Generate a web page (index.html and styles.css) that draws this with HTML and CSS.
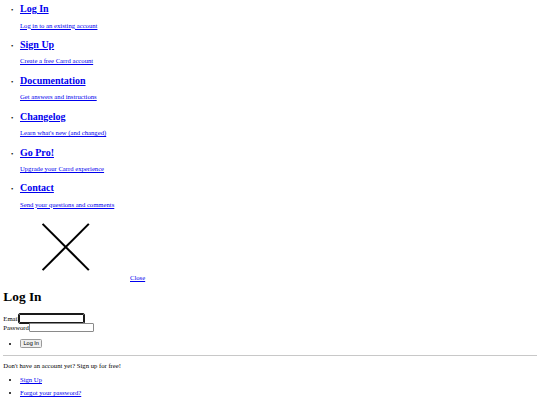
FILE: index.html
```html
<!DOCTYPE html>
<html>
<head>
<meta charset="utf-8">
<link rel="stylesheet" href="styles.css">
</head>
<body>
<ul class="menu">
  <li><h2><a href="#">Log In</a></h2><p><a href="#">Log in to an existing account</a></p></li>
  <li><h2><a href="#">Sign Up</a></h2><p><a href="#">Create a free Carrd account</a></p></li>
  <li><h2><a href="#">Documentation</a></h2><p><a href="#">Get answers and instructions</a></p></li>
  <li><h2><a href="#">Changelog</a></h2><p><a href="#">Learn what's new (and changed)</a></p></li>
  <li><h2><a href="#">Go Pro!</a></h2><p><a href="#">Upgrade your Carrd experience</a></p></li>
  <li><h2><a href="#">Contact</a></h2><p><a href="#">Send your questions and comments</a></p></li>
</ul>
<div class="close-row"><svg class="close-icon" viewBox="0 0 300 150"><line x1="95" y1="16.5" x2="206" y2="127.5"/><line x1="206" y1="16.5" x2="95" y2="127.5"/></svg> <a href="#">Close</a></div>
<h1 class="title">Log In</h1>
<form class="login">
  <div class="row"><label>Email</label><input class="field focused" type="email"></div>
  <div class="row"><label>Password</label><input class="field" type="password"></div>
  <ul class="list btn-row"><li><button type="button" class="btn">Log In</button></li></ul>
</form>
<hr class="rule">
<p class="note">Don't have an account yet? Sign up for free!</p>
<ul class="list links">
  <li><a href="#">Sign Up</a></li>
  <li><a href="#">Forgot your password?</a></li>
</ul>
</body>
</html>
```
FILE: styles.css
```css
html {
  background: #fff;
}
body {
  margin: 3.333px;
  font-family: "Liberation Serif", "Times New Roman", serif;
  font-size: 6.667px;
  color: #000;
}
a {
  color: #0000ee;
}
.menu {
  margin: 0 0 8.75px;
  padding-left: 16.667px;
  list-style: none;
}
.menu li {
  list-style: disc;
}
.menu li::marker {
  content: "\2022\00a0\00a0\00a0\00a0";
  font-size: 6.667px;
}
.menu li + li {
  margin-top: 10px;
}
.menu h2 {
  margin: 0 0 6.667px;
  font-size: 10px;
  line-height: 11.667px;
}
.menu p {
  margin: 0;
  font-size: 6.667px;
  line-height: 7.5px;
}
.close-icon {
  width: 125px;
  height: 62.5px;
}
.close-icon line {
  stroke: #000;
  stroke-width: 5;
}
.title {
  font-size: 13.333px;
  margin: 0.67em 0;
}
.row {
  line-height: 9px;
  height: 9px;
}
.field {
  box-sizing: border-box;
  width: 65px;
  height: 9px;
  padding: 0 1px;
  margin: 0;
  border: 1px solid #8a8a8a;
  border-radius: 1px;
  background: #fff;
  font-family: "Liberation Sans", Arial, sans-serif;
  font-size: 5.556px;
  vertical-align: top;
}
.focused {
  border-color: #1a1a1a;
  outline: 0.8px solid #1a1a1a;
}
.list {
  margin: 6.667px 0;
  padding-left: 16.667px;
}
.btn-row li {
  line-height: 9px;
  height: 9px;
}
.btn {
  box-sizing: border-box;
  height: 9px;
  padding: 0 2.5px;
  margin: 0;
  border: 1px solid #9a9a9a;
  border-radius: 1.5px;
  background: #efefef;
  color: #000;
  font-family: "Liberation Sans", Arial, sans-serif;
  font-size: 5.556px;
  line-height: 7px;
  vertical-align: top;
}
.rule {
  height: 0;
  margin: 3.333px 0;
  border: 0;
  border-top: 1px solid #c8c8c8;
}
.note {
  margin: 6.667px 0;
}
.links li + li {
  margin-top: 6.25px;
}
```
